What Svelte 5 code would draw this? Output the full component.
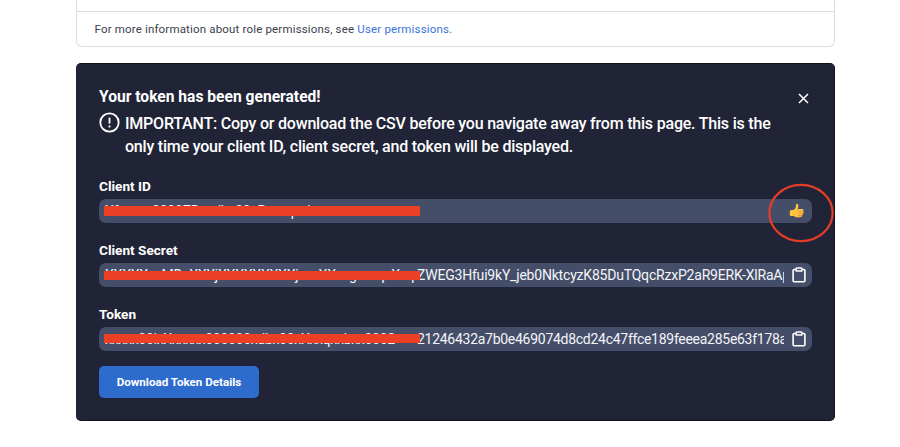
<script>
  const fields = [
    { label: 'Client ID', covered: 'Xfxxxxx0000ZDxxdbx00xPxxxqxxb', visible: '', copied: true, top: 7, height: 10, spacing: -0.2 },
    { label: 'Client Secret', covered: 'XXXXXxxMDxXXXjXXXXXXXXXjxxxXXxxgxxxqxXxq', visible: 'ZWEG3Hfui9kY_jeb0NktcyzK85DuTQqcRzxP2aR9ERK-XlRaAp', copied: false, top: 8, height: 9, spacing: -0.2 },
    { label: 'Token', covered: 'xxxxx00ixXxxxxx000000xdbx00xXxxqxxbxx0002', visible: '21246432a7b0e469074d8cd24c47ffce189feeea285e63f178a', copied: false, top: 7, height: 9, spacing: -0.275 }
  ];
</script>

<main>
  <section class="info">
    <div class="row"></div>
    <p>For more information about role permissions, see <a href="#permissions">User permissions.</a></p>
  </section>

  <section class="panel">
    <header>
      <h2>Your token has been generated!</h2>
      <button class="close" aria-label="Close">
        <svg width="11" height="11" viewBox="0 0 11 11"><path d="M1 1 10 10M10 1 1 10" /></svg>
      </button>
    </header>
    <div class="notice">
      <svg width="21" height="21" viewBox="0 0 21 21">
        <circle cx="10.5" cy="10.5" r="9.2" />
        <path d="M10.5 5.6v6" /><path d="M10.5 13.5v2" />
      </svg>
      <p>IMPORTANT: Copy or download the CSV before you navigate away from this page. This is the<br />only time your client ID, client secret, and token will be displayed.</p>
    </div>

    {#each fields as f}
      <div class="group">
        <h3>{f.label}</h3>
        <div class="field">
          <div class="value" style="letter-spacing: {f.spacing}px"><span class="covered">{f.covered}</span><span class="visible">{f.visible}</span></div>
          <i class="bar" style="top: {f.top}px; height: {f.height}px"></i>
          {#if f.copied}
            <div class="thumb">
              <svg width="16" height="16" viewBox="0 0 16 16">
                <path d="M1.1 7.2 5 6.8C6 5.6 6.7 4.7 6.9 3.2L7 1.6C7.2.5 9 .5 9.3 2.1c.2 1.2-.2 2.7-.5 3.9h4.1c2 0 2.2 1.8 1.1 2.4 1.1.7.8 2-.3 2.2.6.9.1 1.8-.9 1.9.3.9-.3 1.6-1.4 1.6H7.8c-1.2 0-2-.4-2.8-1.1l-3.9-.1C.6 11.3.6 8.6 1.1 7.2Z" fill="#fcc340" />
                <path d="M9.7 8.4h4.1M9.7 10.6h3.8M9.6 12.5h3" fill="none" stroke="#db912e" stroke-width=".8" stroke-linecap="round" />
                <path d="M8.8 6 8.2 7.8M5.2 13c.8.7 1.6 1.1 2.8 1.1h3.3" fill="none" stroke="#e9a735" stroke-width=".7" />
              </svg>
            </div>
          {:else}
            <button class="copy" aria-label="Copy">
              <svg width="14" height="16" viewBox="0 0 14 16">
                <path d="M4 2.5H2.2Q1.1 2.5 1.1 3.6V13.6Q1.1 14.7 2.2 14.7H11.8Q12.9 14.7 12.9 13.6V3.6Q12.9 2.5 11.8 2.5H10" />
                <rect x="4" y="1" width="6" height="3" rx=".8" />
              </svg>
            </button>
          {/if}
        </div>
      </div>
    {/each}
    <button class="download">Download Token Details</button>
    <svg class="ring" width="66" height="60" viewBox="0 0 66 60"><ellipse cx="33" cy="30" rx="31.6" ry="28.2" /></svg>
  </section>
</main>

<style>
  :global(body) { background: #fff; }
  main { box-sizing: border-box; width: 900px; height: 447px; padding-left: 76px; overflow: hidden; font-family: Roboto, 'Liberation Sans', sans-serif; }
  h2, h3, p { margin: 0; white-space: nowrap; }
  button { border: 0; padding: 0; background: none; font-family: inherit; color: #fff; }
  svg { display: block; fill: none; stroke: #fff; }
  .info { box-sizing: border-box; width: 759px; height: 47px; border: 1px solid #d8dee7; border-top: 0; border-radius: 0 0 6px 6px; color: #3b404d; }
  .row { height: 11px; border-bottom: 1px solid #d8dee7; }
  .info p { padding-left: 17.5px; font-size: 11.5px; line-height: 35px; letter-spacing: .17px; }
  a { color: #3974d8; text-decoration: none; }
  .panel { position: relative; box-sizing: border-box; width: 759px; height: 358px; margin-top: 15.5px; padding: 23.5px 23px 0; background: #212437; border: 1px solid #10121c; border-width: 1px 1px 1px 0; border-radius: 5px; color: #fff; }
  header { display: flex; justify-content: space-between; height: 24px; }
  h2 { font-size: 15.6px; font-weight: 700; line-height: 21px; }
  .close { width: 11px; height: 11px; margin: 6px 2px 0 0; }
  .close svg { stroke-width: 1.5; }
  .notice { display: flex; gap: 5px; height: 63px; }
  .notice > svg { margin-top: 1px; stroke-width: 1.8; }
  .notice p { padding-top: 1px; font-size: 16px; letter-spacing: -.205px; font-weight: 500; line-height: 23px; }
  .group { height: 64px; }
  h3 { height: 25px; font-size: 13.6px; font-weight: 700; line-height: 25px; }
  .field { position: relative; display: flex; justify-content: space-between; box-sizing: border-box; width: 713px; height: 24px; padding: 0 6px; border-radius: 7px; background: #454e69; }
  .value { display: flex; width: 679px; overflow: hidden; white-space: nowrap; font-size: 14px; line-height: 24px; color: #f4f5f8; }
  .covered { flex: none; width: 312px; }
  .visible { flex: none; }
  .bar { position: absolute; left: 5px; width: 316px; background: #ed3f25; }
  .copy { width: 14px; height: 16px; margin-top: 4px; }
  .copy svg { stroke-width: 1.6; }
  .thumb { margin: 4px 1px 0 0; }
  .thumb svg { stroke: none; }
  .download { display: block; width: 160px; height: 32px; border-radius: 5px; background: #2d6bcd; font-size: 11.6px; font-weight: 700; }
  .ring { position: absolute; left: 692px; top: 119.5px; stroke: #e33d27; stroke-width: 2.2; }
</style>
